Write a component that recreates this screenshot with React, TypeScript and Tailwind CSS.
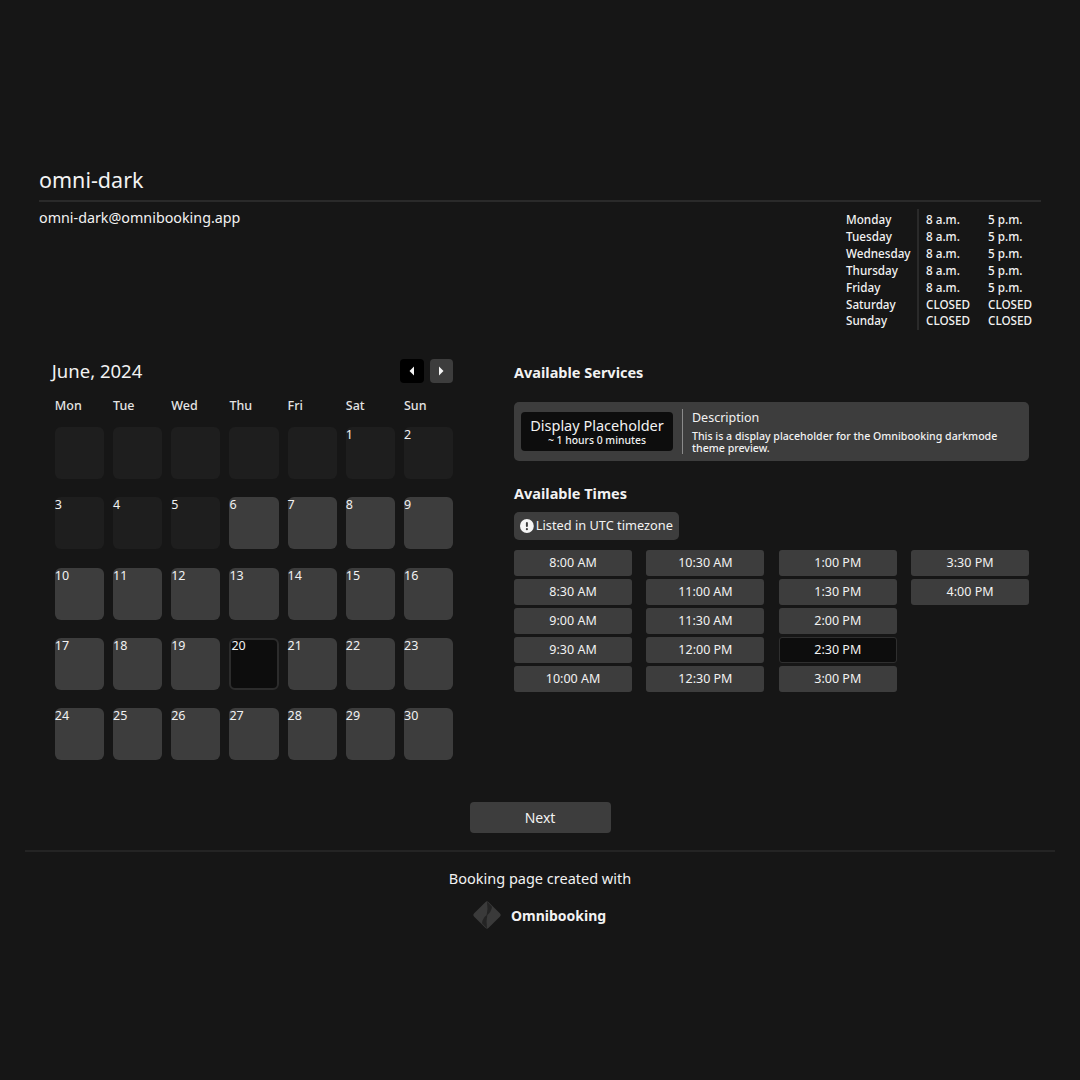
const hours = [
  ["Monday", "8 a.m.", "5 p.m."],
  ["Tuesday", "8 a.m.", "5 p.m."],
  ["Wednesday", "8 a.m.", "5 p.m."],
  ["Thursday", "8 a.m.", "5 p.m."],
  ["Friday", "8 a.m.", "5 p.m."],
  ["Saturday", "CLOSED", "CLOSED"],
  ["Sunday", "CLOSED", "CLOSED"],
];
const days = ["Mon", "Tue", "Wed", "Thu", "Fri", "Sat", "Sun"];
const times = ["8:00 AM", "8:30 AM", "9:00 AM", "9:30 AM", "10:00 AM", "10:30 AM", "11:00 AM", "11:30 AM", "12:00 PM", "12:30 PM", "1:00 PM", "1:30 PM", "2:00 PM", "2:30 PM", "3:00 PM", "3:30 PM", "4:00 PM"];
const cells: (number | null)[] = [null, null, null, null, null, ...Array.from({ length: 30 }, (_, i) => i + 1)];

function Logo() {
  return (
    <svg width="30" height="30" viewBox="0 0 30 30">
      <rect x="4.75" y="4.75" width="20.5" height="20.5" rx="2" transform="rotate(45 15 15)" fill="#3a3a3a" />
      <path d="M15 1.5 L20 6.8 Q19.5 12 14.6 15.5 Q16.2 9 15 1.5 Z" fill="#242424" />
      <path d="M15 28.5 L10 23.2 Q10.5 18 15.4 14.5 Q13.8 21 15 28.5 Z" fill="#242424" />
    </svg>
  );
}

export default function App() {
  return (
    <div className="min-h-[1080px] bg-[#161616] text-[#f2f2f2] font-['Noto_Sans',sans-serif] pt-[165px] px-[25px]">
      <div className="px-[14px]">
        <div className="text-[21.5px] leading-[30px] border-b-2 border-[#2a2a2a] pb-[5px]">omni-dark</div>
        <div className="flex justify-between items-start">
          <div className="text-[14.3px] leading-[20px] pt-[6px]">omni-dark@omnibooking.app</div>
          <div className="flex mt-[7px] mr-[8px] text-[11.7px] leading-[16.9px] font-medium">
            <div className="w-[73px] border-r-2 border-[#2a2a2a] pt-[2px] pb-[1px]">
              {hours.map((h) => <div key={h[0]} className="whitespace-nowrap">{h[0]}</div>)}
            </div>
            <div className="w-[69px] pl-[7px] pt-[2px] pb-[1px]">
              {hours.map((h) => <div key={h[0]} className="whitespace-nowrap">{h[1]}</div>)}
            </div>
            <div className="w-[45px] pt-[2px] pb-[1px]">
              {hours.map((h) => <div key={h[0]} className="whitespace-nowrap">{h[2]}</div>)}
            </div>
          </div>
        </div>
      </div>
      <div className="flex mt-[28.9px]">
        <div className="w-[398.4px] ml-[29.8px] shrink-0">
          <div className="flex items-center justify-between h-[24px]">
            <div className="text-[18.5px] -ml-[3px]">June, 2024</div>
            <div className="flex gap-[5.5px]">
              <div className="w-[24px] h-[24px] rounded-[4px] bg-black flex items-center justify-center">
                <svg width="6" height="10" viewBox="0 0 6 10"><path d="M5 0.5 L0.5 5 L5 9.5 Z" fill="#f5f5f5" /></svg>
              </div>
              <div className="w-[23.5px] h-[24px] rounded-[4px] bg-[#3d3d3d] flex items-center justify-center">
                <svg width="6" height="10" viewBox="0 0 6 10"><path d="M1 0.5 L5.5 5 L1 9.5 Z" fill="#f5f5f5" /></svg>
              </div>
            </div>
          </div>
          <div className="grid grid-cols-7 gap-x-[9px] mt-[14px] text-[12.5px] leading-[18px] font-medium text-[#e4e4e4]">
            {days.map((d) => <div key={d}>{d}</div>)}
          </div>
          <div className="grid grid-cols-7 gap-x-[9px] gap-y-[18.25px] mt-[12px]">
            {cells.map((c, i) => {
              const past = c === null || c < 6;
              const today = c === 20;
              return (
                <div
                  key={i}
                  className={
                    "h-[52px] rounded-[6px] text-[12.5px] leading-[16px] " +
                    (today
                      ? "bg-[#0d0d0d] border-2 border-[#2c2c2c]"
                      : past
                        ? "bg-[#1e1e1e]"
                        : "bg-[#3d3d3d]")
                  }
                >
                  {today ? <div className="-mt-[2px]">{c}</div> : c}
                </div>
              );
            })}
          </div>
        </div>
        <div className="w-[515.2px] ml-[60.8px] pt-[2px]">
          <div className="text-[14.5px] leading-[23px] font-bold">Available Services</div>
          <div className="flex items-center mt-[18px] h-[59px] rounded-[5px] bg-[#3d3d3d] pl-[7px] pr-[20px]">
            <div className="w-[152px] h-[39px] rounded-[4px] bg-[#0d0d0d] flex flex-col items-center justify-center shrink-0">
              <div className="text-[14.5px] leading-[17px] whitespace-nowrap">Display Placeholder</div>
              <div className="text-[10.4px] leading-[12px] font-medium whitespace-nowrap">~ 1 hours 0 minutes</div>
            </div>
            <div className="h-[45px] ml-[9px] pl-[9px] border-l border-[#8a8a8a]">
              <div className="text-[12.5px] leading-[18px]">Description</div>
              <div className="text-[10.6px] leading-[12.5px] font-medium mt-[2.5px]">This is a display placeholder for the Omnibooking darkmode theme preview.</div>
            </div>
          </div>
          <div className="text-[14.5px] leading-[20px] font-bold mt-[22px]">Available Times</div>
          <div className="flex w-[165px] items-center gap-[2px] mt-[9px] h-[28px] rounded-[5px] bg-[#3d3d3d] px-[6px] pb-[1px] text-[12.8px]">
            <svg width="14" height="14" viewBox="0 0 14 14">
              <circle cx="7" cy="7" r="7" fill="#f5f5f5" />
              <rect x="6" y="3" width="2" height="5" rx="1" fill="#3d3d3d" />
              <circle cx="7" cy="10.2" r="1.1" fill="#3d3d3d" />
            </svg>
            <span className="whitespace-nowrap">Listed in UTC timezone</span>
          </div>
          <div className="grid grid-flow-col grid-rows-5 grid-cols-4 gap-x-[14.2px] gap-y-[3px] mt-[10px]">
            {times.map((t) => (
              <div
                key={t}
                className={
                  "h-[26px] rounded-[3px] flex items-center justify-center pt-[1px] text-[12.5px] " +
                  (t === "2:30 PM" ? "bg-[#0d0d0d] border border-[#2f2f2f]" : "bg-[#3d3d3d]")
                }
              >
                {t}
              </div>
            ))}
          </div>
        </div>
      </div>
      <div className="flex justify-center mt-[42px]">
        <div className="w-[141px] h-[31px] rounded-[4px] bg-[#3d3d3d] flex items-center justify-center text-[14px]">Next</div>
      </div>
      <div className="border-t-2 border-[#242424] mt-[17px] flex flex-col items-center">
        <div className="text-[14.5px] leading-[20px] mt-[16px]">Booking page created with</div>
        <div className="flex items-center gap-[9px] mt-[12px] -ml-[2px]">
          <Logo />
          <span className="text-[14px] font-bold">Omnibooking</span>
        </div>
      </div>
    </div>
  );
}
